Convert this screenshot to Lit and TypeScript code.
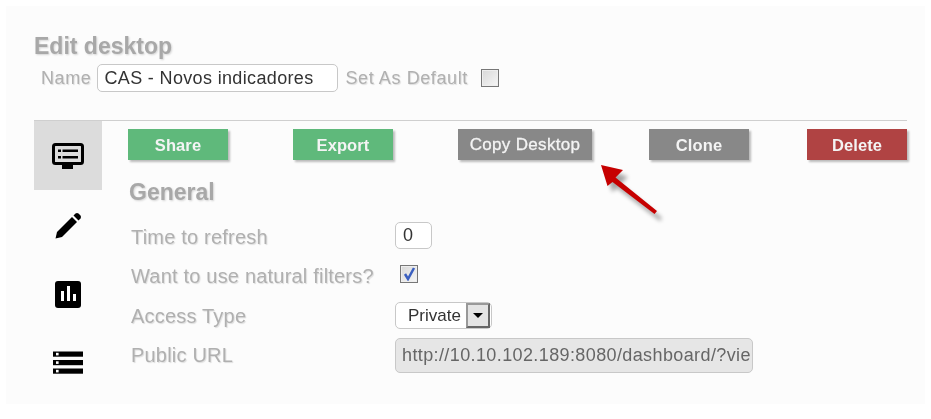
import { LitElement, css, html, svg } from 'lit'
import { customElement } from 'lit/decorators.js'

const desktopIcon = svg`<svg width="32" height="27" viewBox="0 0 32 27">
  <rect x="1.5" y="1.5" width="29" height="19" rx="2" fill="none" stroke="#000" stroke-width="3"/>
  <rect x="10" y="22" width="11" height="4" fill="#000"/>
  <rect x="6" y="6.500" width="3" height="2.500" fill="#000"/><rect x="10.500" y="6.500" width="15.500" height="2.500" fill="#000"/>
  <rect x="6" y="13" width="3" height="2.500" fill="#000"/><rect x="10.500" y="13" width="15.500" height="2.500" fill="#000"/>
</svg>`

const pencilIcon = svg`<svg width="27" height="27" viewBox="0 0 27 27">
  <path d="M0.5 26.5 L2 20 L17 5 L22 10 L7 25 Z" fill="#000"/>
  <path d="M18.5 3.500 L20.5 1.500 Q22 0.500 23.500 1.500 L25.500 3.500 Q26.500 5 25.500 6.500 L23.500 8.500 Z" fill="#000"/>
</svg>`

const chartIcon = svg`<svg width="26" height="27" viewBox="0 0 26 27">
  <rect x="0" y="0" width="26" height="27" rx="3" fill="#000"/>
  <rect x="6" y="10" width="3" height="10" fill="#fff"/>
  <rect x="12" y="5" width="3" height="15" fill="#fff"/>
  <rect x="18" y="13" width="3" height="7" fill="#fff"/>
</svg>`

const storageIcon = svg`<svg width="30" height="24" viewBox="0 0 30 24">
  ${[0.5, 9, 17.5].map(
    (y) => svg`<rect x="0" y="${y}" width="30" height="5.200" fill="#000"/><rect x="3" y="${y + 1.3}" width="2.600" height="2.600" fill="#fff"/>`
  )}
</svg>`

const arrow = svg`<svg class="arrow" width="70" height="62" viewBox="0 0 70 62">
  <path d="M2 1 L24 9 L16 16 L58 50 L56 53 L13 20 L8 24 Z" fill="#000" opacity=".35" transform="translate(4 4)" style="filter:blur(2px)"/>
  <path d="M1 1 L23 6 L15.500 13.500 L57 47 L54.500 50 L12.500 18 L7.500 22 Z" fill="#c60000"/>
</svg>`

@customElement('app-root')
export class AppRoot extends LitElement {
  static styles = css`
    :host {
      display: block;
      height: 419px;
      background: #fff;
      overflow: hidden;
      font-family: 'Liberation Sans', Arial, sans-serif;
    }
    .panel {
      position: relative;
      box-sizing: border-box;
      margin: 6px 0 0 6px;
      width: 919px;
      height: 398px;
      padding: 28px 18px 0 28px;
      background: #fcfcfc;
      filter: blur(0.35px);
    }
    .title,
    .section {
      margin: 0;
      font-size: 23px;
      font-weight: bold;
      color: #a8a8a8;
      text-shadow: 1px 1px 2px #d4d4d4;
    }
    .title {
      line-height: 24px;
    }
    .name-row {
      display: flex;
      align-items: center;
      height: 28px;
      margin: 6px 0 0 7px;
    }
    .label {
      font-size: 18px;
      letter-spacing: 0.6px;
      color: #b0b0b0;
      text-shadow: 1px 1px 1px #ddd;
    }
    .box {
      box-sizing: border-box;
      border: 1px solid #c8c8c8;
      border-radius: 5px;
      background: #fff;
      color: #333;
      font-size: 18px;
      display: flex;
      align-items: center;
    }
    .name-input {
      width: 241px;
      height: 28px;
      margin-left: 6px;
      padding-left: 6px;
      letter-spacing: 0.35px;
    }
    .default-label {
      margin-left: 7px;
    }
    .check {
      box-sizing: border-box;
      width: 18px;
      height: 18px;
      border: 1px solid #777;
      background: linear-gradient(135deg, #d8d8d8, #f6f6f6);
      box-shadow: inset 0 0 0 1px #eee;
      display: block;
    }
    .name-row .check {
      margin-left: 13px;
    }
    .body {
      display: flex;
      margin-top: 28px;
      border-top: 1px solid #cfcfcf;
    }
    .side {
      width: 68px;
      display: flex;
      flex-direction: column;
    }
    .tile {
      box-sizing: border-box;
      height: 68.7px;
      padding-top: 3px;
      display: flex;
      align-items: center;
      justify-content: center;
    }
    .tile.active {
      background: #dcdcdc;
    }
    .main {
      flex: 1;
      padding: 8px 0 0 26px;
    }
    .actions {
      display: flex;
    }
    .btn {
      box-sizing: border-box;
      width: 100px;
      height: 31px;
      padding-top: 1px;
      display: flex;
      align-items: center;
      justify-content: center;
      color: #f4f4f4;
      font-size: 16.5px;
      font-weight: bold;
      letter-spacing: 0.1px;
      box-shadow: 2px 2px 2px #bbb;
    }
    .green {
      background: #5fb97b;
    }
    .grey {
      background: #888;
    }
    .red {
      background: #b04343;
    }
    .copy {
      width: 134px;
      margin-left: 65px;
      font-size: 17px;
      font-weight: normal;
      letter-spacing: 0.33px;
      -webkit-text-stroke: 0.3px #f4f4f4;
    }
    .export {
      margin-left: 65px;
    }
    .clone {
      margin-left: 57px;
    }
    .delete {
      margin-left: 58px;
    }
    .section {
      margin: 20px 0 0 1px;
      line-height: 24px;
    }
    .form {
      display: grid;
      grid-template-columns: 264px 1fr;
      grid-template-rows: 40px 40px 36px 35px;
      margin: 18px 0 0 3px;
      align-items: start;
    }
    .form .label {
      font-size: 20px;
      letter-spacing: 0.2px;
      line-height: 29px;
    }
    .form .label.time {
      line-height: 31px;
    }
    .form .label.public {
      line-height: 34px;
    }
    .zero {
      width: 37px;
      height: 27px;
      padding-left: 7px;
    }
    .form .check {
      margin: 3px 0 0 5px;
      position: relative;
    }
    .form .check svg {
      position: absolute;
      left: 2px;
      top: 1px;
    }
    .select {
      width: 97px;
      height: 27px;
      padding-left: 12px;
      justify-content: space-between;
      padding-right: 1px;
      font-size: 17px;
    }
    .select-btn {
      box-sizing: border-box;
      width: 24px;
      height: 25px;
      background: #e4e4e4;
      border: 2px solid;
      border-color: #999 #666 #666 #999;
      display: flex;
      align-items: center;
      justify-content: center;
    }
    .select-btn i {
      border: 5px solid transparent;
      border-top: 5px solid #000;
      border-bottom: 0;
    }
    .url {
      width: 358px;
      height: 35px;
      padding-left: 6px;
      background: #e6e6e6;
      color: #666;
      letter-spacing: 0.39px;
      white-space: nowrap;
      overflow: hidden;
    }
    .arrow {
      position: absolute;
      left: 594px;
      top: 158px;
    }
  `

  render() {
    return html`
      <div class="panel">
        <h1 class="title">Edit desktop</h1>
        <div class="name-row">
          <span class="label">Name</span>
          <div class="box name-input">CAS - Novos indicadores</div>
          <span class="label default-label">Set As Default</span>
          <span class="check"></span>
        </div>
        <div class="body">
          <div class="side">
            <div class="tile active">${desktopIcon}</div>
            <div class="tile">${pencilIcon}</div>
            <div class="tile">${chartIcon}</div>
            <div class="tile">${storageIcon}</div>
          </div>
          <div class="main">
            <div class="actions">
              <div class="btn green">Share</div>
              <div class="btn green export">Export</div>
              <div class="btn grey copy">Copy Desktop</div>
              <div class="btn grey clone">Clone</div>
              <div class="btn red delete">Delete</div>
            </div>
            <h2 class="section">General</h2>
            <div class="form">
              <span class="label time">Time to refresh</span>
              <div class="box zero">0</div>
              <span class="label">Want to use natural filters?</span>
              <span class="check">
                <svg width="13" height="14" viewBox="0 0 13 14">
                  <path d="M2 7 L5 12 L11 1" fill="none" stroke="#3a5fc0" stroke-width="2.500"/>
                </svg>
              </span>
              <span class="label">Access Type</span>
              <div class="box select">Private<span class="select-btn"><i></i></span></div>
              <span class="label public">Public URL</span>
              <div class="box url">http://10.10.102.189:8080/dashboard/?vie</div>
            </div>
          </div>
        </div>
        ${arrow}
      </div>
    `
  }
}
